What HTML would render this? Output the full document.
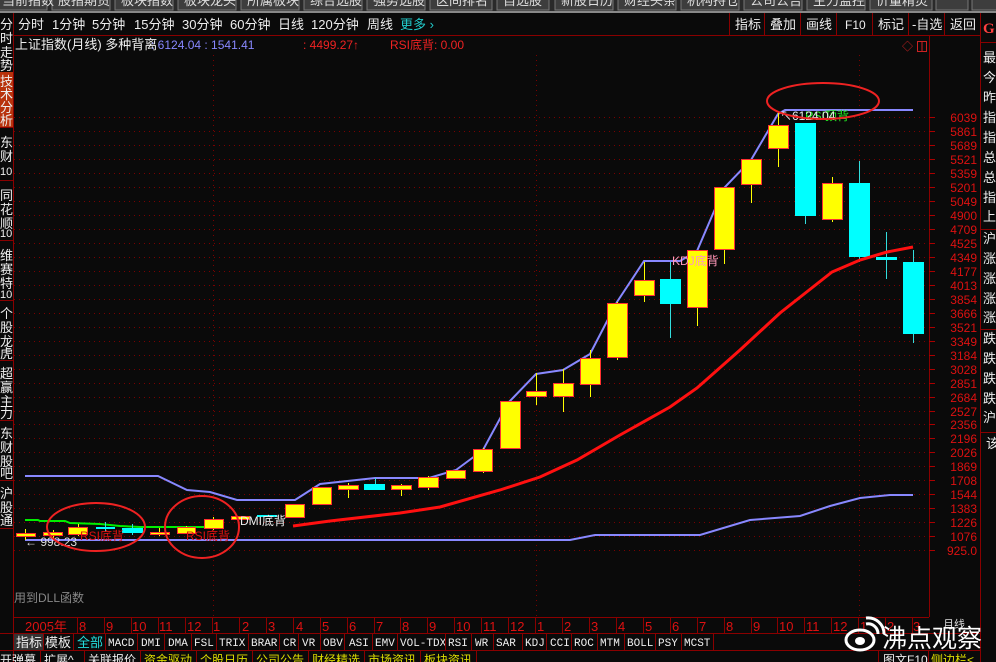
<!DOCTYPE html>
<html><head><meta charset="utf-8"><style>
*{margin:0;padding:0}
body{width:996px;height:662px;background:#0a0a0a;overflow:hidden;position:relative;font-family:"Liberation Sans","Noto Sans CJK SC",sans-serif;}
</style></head><body>
<svg width="996" height="662" style="position:absolute;left:0;top:0" font-family="Liberation Sans, Noto Sans CJK SC, sans-serif">
<rect x="0" y="0" width="996" height="12" fill="#2a2a2a"/>
<g fill="#3d3d3d" stroke="#777" stroke-width="1">
<rect x="-5" y="-5" width="52" height="15"/><rect x="52" y="-5" width="58" height="15"/><rect x="115" y="-5" width="58" height="15"/><rect x="178" y="-5" width="58" height="15"/><rect x="241" y="-5" width="58" height="15"/><rect x="304" y="-5" width="58" height="15"/><rect x="367" y="-5" width="58" height="15"/><rect x="430" y="-5" width="62" height="15"/><rect x="497" y="-5" width="52" height="15"/><rect x="555" y="-5" width="58" height="15"/><rect x="618" y="-5" width="58" height="15"/><rect x="681" y="-5" width="58" height="15"/><rect x="744" y="-5" width="58" height="15"/><rect x="807" y="-5" width="58" height="15"/><rect x="870" y="-5" width="62" height="15"/><rect x="936" y="-5" width="32" height="15"/><rect x="972" y="-5" width="30" height="15"/>
</g>
<g fill="#ddd" font-size="13"><text x="2" y="5">当前指数</text><text x="58" y="5">股指期货</text><text x="121" y="5">板块指数</text><text x="184" y="5">板块龙头</text><text x="247" y="5">所属板块</text><text x="310" y="5">综合选股</text><text x="373" y="5">强势选股</text><text x="436" y="5">区间排名</text><text x="503" y="5">自选股</text><text x="561" y="5">新股日历</text><text x="624" y="5">财经头条</text><text x="687" y="5">机构持仓</text><text x="750" y="5">公司公告</text><text x="813" y="5">主力监控</text><text x="876" y="5">价量精灵</text></g>
<rect x="0" y="11" width="996" height="2" fill="#888"/>

<rect x="0" y="72" width="13" height="55" fill="#b8320c"/>
<g stroke="#8a0000" stroke-width="1"><line x1="13.5" y1="13" x2="13.5" y2="662"/>
<line x1="0" y1="127.5" x2="13" y2="127.5"/><line x1="0" y1="180.5" x2="13" y2="180.5"/><line x1="0" y1="240.5" x2="13" y2="240.5"/><line x1="0" y1="300.5" x2="13" y2="300.5"/><line x1="0" y1="360.5" x2="13" y2="360.5"/><line x1="0" y1="420.5" x2="13" y2="420.5"/><line x1="0" y1="480.5" x2="13" y2="480.5"/><line x1="0" y1="528.5" x2="13" y2="528.5"/></g>
<g fill="#eee" font-size="13">
<text x="0" y="29">分</text><text x="0" y="43">时</text><text x="0" y="57">走</text><text x="0" y="70">势</text>
<text x="0" y="86">技</text><text x="0" y="99">术</text><text x="0" y="112">分</text><text x="0" y="125">析</text>
<text x="0" y="147">东</text><text x="0" y="161">财</text><text x="0" y="175" font-size="11">10</text>
<text x="0" y="200">同</text><text x="0" y="214">花</text><text x="0" y="228">顺</text><text x="0" y="237" font-size="11">10</text>
<text x="0" y="260">维</text><text x="0" y="274">赛</text><text x="0" y="288">特</text><text x="0" y="298" font-size="11">10</text>
<text x="0" y="318">个</text><text x="0" y="332">股</text><text x="0" y="346">龙</text><text x="0" y="358">虎</text>
<text x="0" y="378">超</text><text x="0" y="392">赢</text><text x="0" y="406">主</text><text x="0" y="418">力</text>
<text x="0" y="438">东</text><text x="0" y="452">财</text><text x="0" y="466">股</text><text x="0" y="478">吧</text>
<text x="0" y="498">沪</text><text x="0" y="512">股</text><text x="0" y="525">通</text>
</g>

<g stroke="#8a0000"><line x1="14" y1="35.5" x2="980" y2="35.5"/><line x1="929.5" y1="36" x2="929.5" y2="617"/><line x1="980.5" y1="13" x2="980.5" y2="662"/>
<line x1="729.5" y1="13" x2="729.5" y2="35"/><line x1="764.5" y1="13" x2="764.5" y2="35"/><line x1="800.5" y1="13" x2="800.5" y2="35"/><line x1="836.5" y1="13" x2="836.5" y2="35"/><line x1="872.5" y1="13" x2="872.5" y2="35"/><line x1="908.5" y1="13" x2="908.5" y2="35"/><line x1="944.5" y1="13" x2="944.5" y2="35"/></g>
<g fill="#eee" font-size="13">
<text x="18" y="29">分时</text><text x="52" y="29">1分钟</text><text x="92" y="29">5分钟</text><text x="134" y="29">15分钟</text><text x="182" y="29">30分钟</text><text x="230" y="29">60分钟</text><text x="278" y="29">日线</text><text x="311" y="29">120分钟</text><text x="367" y="29">周线</text><text x="400" y="29" fill="#22cccc">更多 ›</text>
<text x="735" y="29">指标</text><text x="770" y="29">叠加</text><text x="806" y="29">画线</text><text x="845" y="29" font-size="12">F10</text><text x="878" y="29">标记</text><text x="912" y="29">-自选</text><text x="950" y="29">返回</text>
<text x="15" y="49">上证指数(月线) 多种背离</text>
</g>
<text x="983" y="33" fill="#ff4040" font-size="15" font-weight="bold" font-family="Liberation Serif,serif">G</text>
<text x="151" y="49" fill="#8888ff" font-size="12">  : 6124.04  : 1541.41</text>
<text x="303" y="49" fill="#ee2222" font-size="12">: 4499.27↑</text>
<text x="390" y="49" fill="#ee2222" font-size="12">RSI底背: 0.00</text>
<text x="902" y="50" fill="#cc2222" font-size="11">◇</text><rect x="917.5" y="41.5" width="9" height="10" fill="none" stroke="#cc2222"/><line x1="922" y1="41" x2="922" y2="52" stroke="#cc2222"/>

<g fill="#eee" font-size="13">
<text x="983" y="62">最</text><text x="983" y="82">今</text><text x="983" y="102">昨</text><text x="983" y="122">指</text><text x="983" y="142">指</text><text x="983" y="162">总</text><text x="983" y="182">总</text><text x="983" y="202">指</text><text x="983" y="221">上</text>
<text x="983" y="243">沪</text><text x="983" y="263">涨</text><text x="983" y="283">涨</text><text x="983" y="303">涨</text><text x="983" y="322">涨</text>
<text x="983" y="343">跌</text><text x="983" y="363">跌</text><text x="983" y="383">跌</text><text x="983" y="403">跌</text><text x="983" y="422">沪</text><text x="986" y="448">该</text></g>
<g stroke="#8a0000"><line x1="980" y1="42.5" x2="996" y2="42.5"/><line x1="980" y1="229.5" x2="996" y2="229.5"/><line x1="980" y1="329.5" x2="996" y2="329.5"/><line x1="980" y1="432.5" x2="996" y2="432.5"/></g>

<g stroke="#7a0000" stroke-dasharray="1,4">
<line x1="14" y1="117.5" x2="929" y2="117.5"/><line x1="14" y1="131.5" x2="929" y2="131.5"/><line x1="14" y1="145.5" x2="929" y2="145.5"/><line x1="14" y1="159.5" x2="929" y2="159.5"/><line x1="14" y1="173.5" x2="929" y2="173.5"/><line x1="14" y1="187.5" x2="929" y2="187.5"/><line x1="14" y1="201.5" x2="929" y2="201.5"/><line x1="14" y1="215.5" x2="929" y2="215.5"/><line x1="14" y1="229.5" x2="929" y2="229.5"/><line x1="14" y1="243.5" x2="929" y2="243.5"/><line x1="14" y1="257.5" x2="929" y2="257.5"/><line x1="14" y1="271.5" x2="929" y2="271.5"/><line x1="14" y1="285.5" x2="929" y2="285.5"/><line x1="14" y1="299.5" x2="929" y2="299.5"/><line x1="14" y1="313.5" x2="929" y2="313.5"/><line x1="14" y1="327.5" x2="929" y2="327.5"/><line x1="14" y1="341.5" x2="929" y2="341.5"/><line x1="14" y1="355.5" x2="929" y2="355.5"/><line x1="14" y1="369.5" x2="929" y2="369.5"/><line x1="14" y1="383.5" x2="929" y2="383.5"/><line x1="14" y1="397.5" x2="929" y2="397.5"/><line x1="14" y1="411.5" x2="929" y2="411.5"/><line x1="14" y1="424.5" x2="929" y2="424.5"/><line x1="14" y1="438.5" x2="929" y2="438.5"/><line x1="14" y1="452.5" x2="929" y2="452.5"/><line x1="14" y1="466.5" x2="929" y2="466.5"/><line x1="14" y1="480.5" x2="929" y2="480.5"/><line x1="14" y1="494.5" x2="929" y2="494.5"/><line x1="14" y1="508.5" x2="929" y2="508.5"/><line x1="14" y1="522.5" x2="929" y2="522.5"/><line x1="14" y1="536.5" x2="929" y2="536.5"/><line x1="14" y1="550.5" x2="929" y2="550.5"/>
<line x1="213.5" y1="55" x2="213.5" y2="617"/><line x1="536.5" y1="55" x2="536.5" y2="617"/><line x1="859.5" y1="55" x2="859.5" y2="617"/>
</g>
<g stroke="#aa0000">
<line x1="929" y1="117.5" x2="935" y2="117.5"/><line x1="929" y1="131.5" x2="935" y2="131.5"/><line x1="929" y1="145.5" x2="935" y2="145.5"/><line x1="929" y1="159.5" x2="935" y2="159.5"/><line x1="929" y1="173.5" x2="935" y2="173.5"/><line x1="929" y1="187.5" x2="935" y2="187.5"/><line x1="929" y1="201.5" x2="935" y2="201.5"/><line x1="929" y1="215.5" x2="935" y2="215.5"/><line x1="929" y1="229.5" x2="935" y2="229.5"/><line x1="929" y1="243.5" x2="935" y2="243.5"/><line x1="929" y1="257.5" x2="935" y2="257.5"/><line x1="929" y1="271.5" x2="935" y2="271.5"/><line x1="929" y1="285.5" x2="935" y2="285.5"/><line x1="929" y1="299.5" x2="935" y2="299.5"/><line x1="929" y1="313.5" x2="935" y2="313.5"/><line x1="929" y1="327.5" x2="935" y2="327.5"/><line x1="929" y1="341.5" x2="935" y2="341.5"/><line x1="929" y1="355.5" x2="935" y2="355.5"/><line x1="929" y1="369.5" x2="935" y2="369.5"/><line x1="929" y1="383.5" x2="935" y2="383.5"/><line x1="929" y1="397.5" x2="935" y2="397.5"/><line x1="929" y1="411.5" x2="935" y2="411.5"/><line x1="929" y1="424.5" x2="935" y2="424.5"/><line x1="929" y1="438.5" x2="935" y2="438.5"/><line x1="929" y1="452.5" x2="935" y2="452.5"/><line x1="929" y1="466.5" x2="935" y2="466.5"/><line x1="929" y1="480.5" x2="935" y2="480.5"/><line x1="929" y1="494.5" x2="935" y2="494.5"/><line x1="929" y1="508.5" x2="935" y2="508.5"/><line x1="929" y1="522.5" x2="935" y2="522.5"/><line x1="929" y1="536.5" x2="935" y2="536.5"/><line x1="929" y1="550.5" x2="935" y2="550.5"/>
</g>
<g fill="#dd1111" font-size="12" text-anchor="end">
<text x="977" y="122">6039</text><text x="977" y="136">5861</text><text x="977" y="150">5689</text><text x="977" y="164">5521</text><text x="977" y="178">5359</text><text x="977" y="192">5201</text><text x="977" y="206">5049</text><text x="977" y="220">4900</text><text x="977" y="234">4709</text><text x="977" y="248">4525</text><text x="977" y="262">4349</text><text x="977" y="276">4177</text><text x="977" y="290">4013</text><text x="977" y="304">3854</text><text x="977" y="318">3666</text><text x="977" y="332">3521</text><text x="977" y="346">3349</text><text x="977" y="360">3184</text><text x="977" y="374">3028</text><text x="977" y="388">2851</text><text x="977" y="402">2684</text><text x="977" y="416">2527</text><text x="977" y="429">2356</text><text x="977" y="443">2196</text><text x="977" y="457">2026</text><text x="977" y="471">1869</text><text x="977" y="485">1708</text><text x="977" y="499">1544</text><text x="977" y="513">1383</text><text x="977" y="527">1226</text><text x="977" y="541">1076</text><text x="977" y="555">925.0</text>
</g>

<polyline fill="none" stroke="#8888ff" stroke-width="2" points="25,476 158,476 187,490 210,492 237,500 295,500 320,484 375,478 429,478 456,470 483,450 509,402 536,374 563,370 590,354 617,302 644,261 680,261 697,251 724,188 751,160 778,114 785,110 913,110"/>
<polyline fill="none" stroke="#8888ff" stroke-width="2" points="25,540 570,540 595,535 700,535 750,520 800,516 830,506 860,498 890,495 913,495"/>
<polyline fill="none" stroke="#00ee00" stroke-width="2" points="25,520 38,520 40,521 65,521 70,523 100,524 120,526 140,527 170,527 213,527"/>

<g stroke="#ffff00" stroke-width="1">
<line x1="25.5" y1="529" x2="25.5" y2="540"/><line x1="53.5" y1="530" x2="53.5" y2="538"/><line x1="78.5" y1="524" x2="78.5" y2="536"/><line x1="159.5" y1="528" x2="159.5" y2="536"/><line x1="186.5" y1="526" x2="186.5" y2="534"/><line x1="213.5" y1="517" x2="213.5" y2="530"/><line x1="348.5" y1="483" x2="348.5" y2="498"/><line x1="401.5" y1="484" x2="401.5" y2="496"/><line x1="428.5" y1="476" x2="428.5" y2="490"/><line x1="483.5" y1="448" x2="483.5" y2="473"/><line x1="536.5" y1="373" x2="536.5" y2="405"/><line x1="563.5" y1="369" x2="563.5" y2="412"/><line x1="590.5" y1="350" x2="590.5" y2="397"/><line x1="617.5" y1="302" x2="617.5" y2="360"/><line x1="644.5" y1="262" x2="644.5" y2="302"/><line x1="697.5" y1="250" x2="697.5" y2="326"/><line x1="724.5" y1="187" x2="724.5" y2="264"/><line x1="751.5" y1="159" x2="751.5" y2="203"/><line x1="778.5" y1="112" x2="778.5" y2="167"/><line x1="832.5" y1="177" x2="832.5" y2="222"/>
</g>
<g fill="#ffff00" stroke="#ff3030" stroke-width="1">
<rect x="16.5" y="533.5" width="19" height="3"/><rect x="43.5" y="532.5" width="19" height="3"/><rect x="68.5" y="527.5" width="19" height="7"/><rect x="150.5" y="532.5" width="19" height="2"/><rect x="177.5" y="527.5" width="18" height="6"/><rect x="204.5" y="519.5" width="19" height="9"/><rect x="231.5" y="516.5" width="18" height="3"/><rect x="285.5" y="504.5" width="19" height="13"/><rect x="312.5" y="487.5" width="19" height="17"/><rect x="338.5" y="485.5" width="20" height="4"/><rect x="391.5" y="485.5" width="20" height="4"/><rect x="418.5" y="477.5" width="20" height="10"/><rect x="446.5" y="470.5" width="19" height="8"/><rect x="473.5" y="449.5" width="19" height="22"/><rect x="500.5" y="401.5" width="20" height="47"/><rect x="526.5" y="391.5" width="20" height="5"/><rect x="553.5" y="383.5" width="20" height="13"/><rect x="580.5" y="358.5" width="20" height="26"/><rect x="607.5" y="303.5" width="20" height="54"/><rect x="634.5" y="280.5" width="20" height="15"/><rect x="687.5" y="250.5" width="20" height="57"/><rect x="714.5" y="187.5" width="20" height="62"/><rect x="741.5" y="159.5" width="20" height="25"/><rect x="768.5" y="125.5" width="20" height="23"/><rect x="822.5" y="183.5" width="20" height="36"/>
</g>
<g stroke="#33dddd"><line x1="105.5" y1="522" x2="105.5" y2="532"/><line x1="132.5" y1="524" x2="132.5" y2="535"/><line x1="375.5" y1="478" x2="375.5" y2="490"/><line x1="670.5" y1="262" x2="670.5" y2="338"/><line x1="805.5" y1="123" x2="805.5" y2="224"/><line x1="859.5" y1="161" x2="859.5" y2="262"/><line x1="886.5" y1="232" x2="886.5" y2="279"/><line x1="913.5" y1="250" x2="913.5" y2="343"/></g>
<g fill="#00ffff">
<rect x="96" y="527" width="19" height="2"/><rect x="122" y="528" width="21" height="5"/><rect x="257" y="515" width="20" height="2"/><rect x="364" y="484" width="21" height="6"/><rect x="660" y="279" width="21" height="25"/><rect x="795" y="123" width="21" height="93"/><rect x="849" y="183" width="21" height="74"/><rect x="876" y="257" width="21" height="3"/><rect x="903" y="262" width="21" height="72"/>
</g>
<polyline fill="none" stroke="#ff1010" stroke-width="3" points="293,526 330,521 400,513 440,507 500,490 540,477 577,460 620,435 670,407 697,388 740,350 780,313 832,272 860,260 887,252 913,247"/>

<text x="240" y="525" fill="#eeeeee" font-size="12">DMI底背</text>
<text x="80" y="540" fill="#dd1111" font-size="12">RSI底背</text>
<text x="186" y="540" fill="#dd1111" font-size="12">RSI底背</text>
<text x="25" y="546" fill="#dddddd" font-size="12">← 998.23</text>
<text x="672" y="265" fill="#ff99bb" font-size="12">KDJ底背</text>
<text x="805" y="120" fill="#22ee22" font-size="12">RSI顶背</text>
<text x="780" y="120" fill="#eeeeee" font-size="12">↖6124.04</text>
<g fill="none" stroke="#ee2222" stroke-width="2">
<ellipse cx="96" cy="527" rx="49" ry="24"/><ellipse cx="202" cy="527" rx="37" ry="31"/><ellipse cx="823" cy="101" rx="56" ry="18"/>
</g>
<text x="14" y="602" fill="#888" font-size="12">用到DLL函数</text>

<g stroke="#8a0000"><line x1="14" y1="617.5" x2="929" y2="617.5"/><line x1="0" y1="633.5" x2="980" y2="633.5"/><line x1="0" y1="650.5" x2="980" y2="650.5"/></g>
<g fill="#dd1111" font-size="13">
<text x="25" y="631">2005年</text><text x="79" y="631">8</text><text x="106" y="631">9</text><text x="132" y="631">10</text><text x="159" y="631">11</text><text x="187" y="631">12</text><text x="213" y="631">1</text><text x="242" y="631">2</text><text x="268" y="631">3</text><text x="296" y="631">4</text><text x="322" y="631">5</text><text x="349" y="631">6</text><text x="376" y="631">7</text><text x="402" y="631">8</text><text x="429" y="631">9</text><text x="456" y="631">10</text><text x="483" y="631">11</text><text x="510" y="631">12</text><text x="537" y="631">1</text><text x="564" y="631">2</text><text x="591" y="631">3</text><text x="618" y="631">4</text><text x="645" y="631">5</text><text x="672" y="631">6</text><text x="699" y="631">7</text><text x="726" y="631">8</text><text x="753" y="631">9</text><text x="779" y="631">10</text><text x="806" y="631">11</text><text x="833" y="631">12</text><text x="860" y="631">1</text><text x="887" y="631">2</text><text x="913" y="631">3</text>
</g>
<g stroke="#8a0000"><line x1="77.5" y1="618" x2="77.5" y2="633"/><line x1="104.5" y1="618" x2="104.5" y2="633"/><line x1="131.5" y1="618" x2="131.5" y2="633"/><line x1="158.5" y1="618" x2="158.5" y2="633"/><line x1="185.5" y1="618" x2="185.5" y2="633"/><line x1="212.5" y1="618" x2="212.5" y2="633"/><line x1="239.5" y1="618" x2="239.5" y2="633"/><line x1="266.5" y1="618" x2="266.5" y2="633"/><line x1="293.5" y1="618" x2="293.5" y2="633"/><line x1="320.5" y1="618" x2="320.5" y2="633"/><line x1="347.5" y1="618" x2="347.5" y2="633"/><line x1="374.5" y1="618" x2="374.5" y2="633"/><line x1="400.5" y1="618" x2="400.5" y2="633"/><line x1="427.5" y1="618" x2="427.5" y2="633"/><line x1="454.5" y1="618" x2="454.5" y2="633"/><line x1="481.5" y1="618" x2="481.5" y2="633"/><line x1="508.5" y1="618" x2="508.5" y2="633"/><line x1="535.5" y1="618" x2="535.5" y2="633"/><line x1="562.5" y1="618" x2="562.5" y2="633"/><line x1="589.5" y1="618" x2="589.5" y2="633"/><line x1="616.5" y1="618" x2="616.5" y2="633"/><line x1="643.5" y1="618" x2="643.5" y2="633"/><line x1="670.5" y1="618" x2="670.5" y2="633"/><line x1="697.5" y1="618" x2="697.5" y2="633"/><line x1="724.5" y1="618" x2="724.5" y2="633"/><line x1="751.5" y1="618" x2="751.5" y2="633"/><line x1="777.5" y1="618" x2="777.5" y2="633"/><line x1="804.5" y1="618" x2="804.5" y2="633"/><line x1="831.5" y1="618" x2="831.5" y2="633"/><line x1="858.5" y1="618" x2="858.5" y2="633"/><line x1="885.5" y1="618" x2="885.5" y2="633"/><line x1="912.5" y1="618" x2="912.5" y2="633"/></g>
<text x="943" y="628" fill="#ddd" font-size="11">月线</text>

<rect x="14" y="634" width="29" height="16" fill="#333"/>
<g fill="#eee" font-size="13"><text x="16" y="647">指标</text><text x="45" y="647">模板</text><text x="77" y="647" fill="#22dddd">全部</text></g>
<g fill="#eee" font-size="11" font-family="Liberation Mono, monospace">
<text x="108" y="646">MACD</text><text x="141" y="646">DMI</text><text x="168" y="646">DMA</text><text x="194" y="646">FSL</text><text x="219" y="646">TRIX</text><text x="251" y="646">BRAR</text><text x="283" y="646">CR</text><text x="302" y="646">VR</text><text x="323" y="646">OBV</text><text x="349" y="646">ASI</text><text x="375" y="646">EMV</text><text x="400" y="646">VOL-TDX</text><text x="448" y="646">RSI</text><text x="475" y="646">WR</text><text x="496" y="646">SAR</text><text x="525" y="646">KDJ</text><text x="550" y="646">CCI</text><text x="574" y="646">ROC</text><text x="600" y="646">MTM</text><text x="627" y="646">BOLL</text><text x="658" y="646">PSY</text><text x="684" y="646">MCST</text></g>
<g stroke="#8a0000"><line x1="43.5" y1="634" x2="43.5" y2="650"/><line x1="73.5" y1="634" x2="73.5" y2="650"/><line x1="105.5" y1="634" x2="105.5" y2="650"/><line x1="137.5" y1="634" x2="137.5" y2="650"/><line x1="164.5" y1="634" x2="164.5" y2="650"/><line x1="191.5" y1="634" x2="191.5" y2="650"/><line x1="216.5" y1="634" x2="216.5" y2="650"/><line x1="248.5" y1="634" x2="248.5" y2="650"/><line x1="279.5" y1="634" x2="279.5" y2="650"/><line x1="298.5" y1="634" x2="298.5" y2="650"/><line x1="320.5" y1="634" x2="320.5" y2="650"/><line x1="344.5" y1="634" x2="344.5" y2="650"/><line x1="372.5" y1="634" x2="372.5" y2="650"/><line x1="397.5" y1="634" x2="397.5" y2="650"/><line x1="445.5" y1="634" x2="445.5" y2="650"/><line x1="471.5" y1="634" x2="471.5" y2="650"/><line x1="493.5" y1="634" x2="493.5" y2="650"/><line x1="522.5" y1="634" x2="522.5" y2="650"/><line x1="546.5" y1="634" x2="546.5" y2="650"/><line x1="571.5" y1="634" x2="571.5" y2="650"/><line x1="597.5" y1="634" x2="597.5" y2="650"/><line x1="624.5" y1="634" x2="624.5" y2="650"/><line x1="655.5" y1="634" x2="655.5" y2="650"/><line x1="681.5" y1="634" x2="681.5" y2="650"/><line x1="713.5" y1="634" x2="713.5" y2="650"/></g>

<g font-size="12"><text x="0" y="664" fill="#eee">开弹幕</text><text x="44" y="664" fill="#eee">扩展^</text><text x="88" y="664" fill="#eee">关联报价</text>
<text x="144" y="664" fill="#dddd00">资金驱动</text><text x="200" y="664" fill="#dddd00">个股日历</text><text x="256" y="664" fill="#dddd00">公司公告</text><text x="312" y="664" fill="#dddd00">财经精选</text><text x="368" y="664" fill="#dddd00">市场资讯</text><text x="424" y="664" fill="#dddd00">板块资讯</text>
<text x="883" y="664" fill="#eee">图文F10</text><text x="931" y="664" fill="#dddd00">侧边栏&lt;</text></g>
<g stroke="#8a0000"><line x1="40.5" y1="651" x2="40.5" y2="662"/><line x1="84.5" y1="651" x2="84.5" y2="662"/><line x1="140.5" y1="651" x2="140.5" y2="662"/><line x1="196.5" y1="651" x2="196.5" y2="662"/><line x1="252.5" y1="651" x2="252.5" y2="662"/><line x1="308.5" y1="651" x2="308.5" y2="662"/><line x1="364.5" y1="651" x2="364.5" y2="662"/><line x1="420.5" y1="651" x2="420.5" y2="662"/><line x1="476.5" y1="651" x2="476.5" y2="662"/><line x1="878.5" y1="651" x2="878.5" y2="662"/><line x1="928.5" y1="651" x2="928.5" y2="662"/></g>

<g fill="none" stroke="#fff" stroke-width="3"><ellipse cx="860" cy="640" rx="14" ry="10"/><path d="M866 624 a10 10 0 0 1 12 10"/><path d="M866 618 a16 16 0 0 1 18 16"/></g>
<ellipse cx="860" cy="641" rx="5" ry="4" fill="#fff"/>
<text x="882" y="647" fill="#fff" font-size="25">沸点观察</text>
</svg>
</body></html>
